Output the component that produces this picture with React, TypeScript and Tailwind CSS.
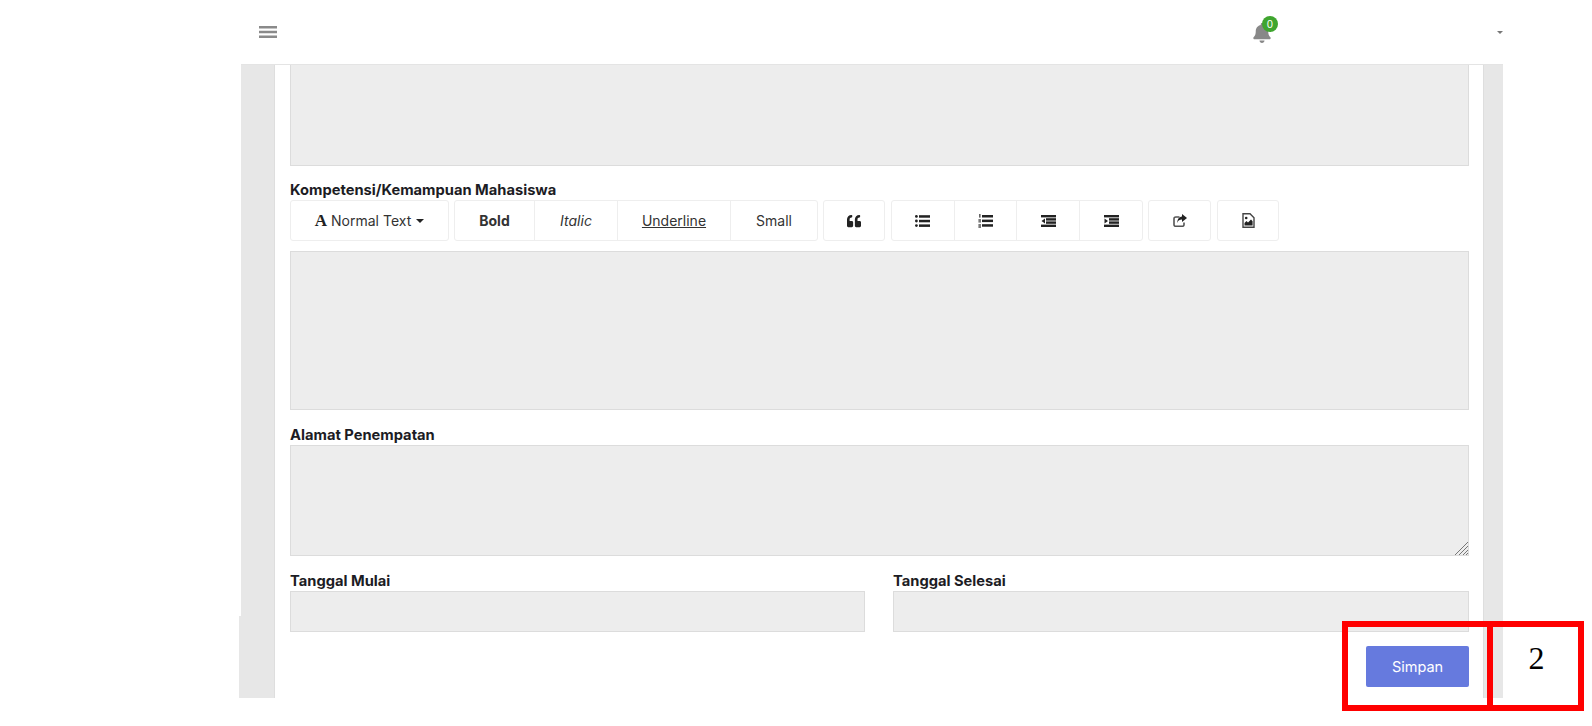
import { FaBell, FaQuoteLeft } from 'react-icons/fa';

const textBtn = 'h-full flex items-center justify-center text-[14px] text-[#333] border-r border-[#eee] last:border-r-0';
const iconBtn = 'h-full flex items-center justify-center text-[#222] border-r border-[#eee] last:border-r-0';
const group = 'h-full flex border border-[#eee] rounded-[3px] bg-white';
const field = 'block w-full bg-[#ededed] border border-[#dcdcdc]';
const label = 'block h-[19px] text-[14.7px] leading-[19px] font-bold text-[#1c1c24]';

const ListIcon = () => (
  <svg width="15" height="12" viewBox="0 0 15 12" fill="currentColor">
    <circle cx="1.4" cy="1.4" r="1.4" />
    <circle cx="1.4" cy="6" r="1.4" />
    <circle cx="1.4" cy="10.6" r="1.4" />
    <rect x="4" y="0.2" width="11" height="2.5" />
    <rect x="4" y="4.8" width="11" height="2.5" />
    <rect x="4" y="9.4" width="11" height="2.5" />
  </svg>
);

const OrderedIcon = () => (
  <svg width="15" height="14" viewBox="0 0 15 14" fill="currentColor">
    <rect x="1" y="0" width="1.6" height="3.6" opacity="0.7" />
    <rect x="0.4" y="5" width="2.6" height="3.6" opacity="0.6" />
    <rect x="0.4" y="10" width="2.6" height="4" opacity="0.6" />
    <rect x="4" y="1" width="11" height="2.5" />
    <rect x="4" y="5.6" width="11" height="2.5" />
    <rect x="4" y="10.2" width="11" height="2.5" />
  </svg>
);

const OutdentIcon = () => (
  <svg width="15" height="12" viewBox="0 0 15 12" fill="currentColor">
    <rect width="15" height="2.4" />
    <rect x="5" y="3.2" width="10" height="2.4" />
    <rect x="5" y="6.4" width="10" height="2.4" />
    <rect y="9.6" width="15" height="2.4" />
    <path d="M0.5 6L4 3.6v4.8z" />
  </svg>
);

const IndentIcon = () => (
  <svg width="15" height="12" viewBox="0 0 15 12" fill="currentColor">
    <rect width="15" height="2.4" />
    <rect x="5" y="3.2" width="10" height="2.4" />
    <rect x="5" y="6.4" width="10" height="2.4" />
    <rect y="9.6" width="15" height="2.4" />
    <path d="M4 6L0.5 3.6v4.8z" />
  </svg>
);

const ShareIcon = () => (
  <svg width="14" height="13" viewBox="0 0 14 13" fill="currentColor">
    <path d="M6.5 3H3A1.8 1.8 0 0 0 1 4.8v5.9A1.6 1.6 0 0 0 2.7 12.3h6.6A1.6 1.6 0 0 0 11 10.7V8.5" fill="none" stroke="#555" strokeWidth="1.6" />
    <path d="M9 0l5 4-5 4V5.6C6.6 5.6 5 6.6 4.4 9 4.1 5.4 6 3 9 2.6z" />
  </svg>
);

const FileImageIcon = () => (
  <svg width="13" height="15" viewBox="0 0 13 15" fill="currentColor">
    <path d="M1 .8h7l4 4v9.4H1z" fill="none" stroke="#444" strokeWidth="1.4" />
    <circle cx="4.2" cy="5" r="1.3" />
    <path d="M2.5 12.6V10l2-2 1.5 1.5L9 6.6l1.6 1.6v4.4z" />
  </svg>
);

const Toolbar = () => (
  <div className="h-[41px] flex gap-[6px]">
    <div className={`${group} w-[159px] mr-[-1px]`}>
      <button className={`${textBtn} w-full gap-[4px]`}>
        <span className="text-[17px] leading-none font-bold text-[#222] font-['Liberation_Serif',serif]">A</span>
        <span>Normal Text</span>
        <span className="w-0 h-0 ml-[1px] border-x-[4px] border-x-transparent border-t-[4px] border-t-[#222]" />
      </button>
    </div>
    <div className={group}>
      <button className={`${textBtn} w-[80px] font-bold text-[#222]`}>Bold</button>
      <button className={`${textBtn} w-[83px] italic`}>Italic</button>
      <button className={`${textBtn} w-[113px] underline`}>Underline</button>
      <button className={`${textBtn} w-[86px]`}>Small</button>
    </div>
    <div className={`${group} ml-[-1px]`}>
      <button className={`${iconBtn} w-[60px]`}><FaQuoteLeft size={14} /></button>
    </div>
    <div className={group}>
      <button className={`${iconBtn} w-[62.5px]`}><ListIcon /></button>
      <button className={`${iconBtn} w-[62.5px]`}><OrderedIcon /></button>
      <button className={`${iconBtn} w-[63px]`}><OutdentIcon /></button>
      <button className={`${iconBtn} w-[62px]`}><IndentIcon /></button>
    </div>
    <div className={`${group} ml-[-1px]`}>
      <button className={`${iconBtn} w-[61px]`}><ShareIcon /></button>
    </div>
    <div className={group}>
      <button className={`${iconBtn} w-[60px]`}><FileImageIcon /></button>
    </div>
  </div>
);

export default function App() {
  return (
    <div className="relative h-[726px] bg-white overflow-hidden font-['Inter','Liberation_Sans',sans-serif]">
      <div className="ml-[239px] w-[1264px]">
        <header className="h-[65px] ml-[2px] flex items-center justify-between pl-[18px] bg-white border-b border-[#e4e4e4]">
          <svg width="18" height="12" viewBox="0 0 18 12" className="text-[#8a8a8a]" fill="currentColor">
            <rect y="0" width="18" height="2.5" />
            <rect y="4.75" width="18" height="2.5" />
            <rect y="9.5" width="18" height="2.5" />
          </svg>
          <div className="flex items-center">
            <div className="relative mr-[225px] mt-[2px]">
              <FaBell size={20} className="text-[#888]" />
              <span className="absolute -top-[7px] left-[10px] w-[16px] h-[16px] rounded-full bg-[#3fa52f] text-white text-[10px] leading-[16px] text-center">0</span>
            </div>
            <span className="w-0 h-0 border-x-[3px] border-x-transparent border-t-[3px] border-t-[#777]" />
          </div>
        </header>

        <main className="h-[633px] flex">
          <div className="w-[35px] flex flex-col">
            <div className="flex-1 ml-[2px] bg-[#e7e7e7]" />
            <div className="h-[82px] bg-[#e7e7e7]" />
          </div>
          <div className="w-[1210px] bg-white border-x border-[#dedede] pl-[15px] pr-[14px]">
            <div className={`${field} h-[101px] border-t-0`} />
            <div className="mt-[15px]">
              <span className={label}>Kompetensi/Kemampuan Mahasiswa</span>
              <Toolbar />
            </div>
            <div className={`${field} h-[159px] mt-[10px]`} />
            <div className="mt-[16px]">
              <span className={label}>Alamat Penempatan</span>
              <div className="relative">
                <textarea disabled className={`${field} h-[111px] resize-none`} />
                <svg width="14" height="14" viewBox="0 0 14 14" className="absolute right-[1px] bottom-[1px] text-[#777]" stroke="currentColor" strokeWidth="1">
                  <path d="M1 14L14 1M5 14L14 5M9 14L14 9M12 14L14 12" />
                </svg>
              </div>
            </div>
            <div className="mt-[16px] flex gap-[28px]">
              <div className="w-[575px]">
                <span className={label}>Tanggal Mulai</span>
                <div className={`${field} h-[41px]`} />
              </div>
              <div className="flex-1">
                <span className={label}>Tanggal Selesai</span>
                <div className={`${field} h-[41px]`} />
              </div>
            </div>
            <div className="mt-[14px] flex justify-end">
              <button className="w-[103px] h-[41px] rounded-[2px] bg-[#667ade] text-white text-[14.5px]">Simpan</button>
            </div>
          </div>
          <div className="w-[19px] bg-[#e7e7e7]" />
        </main>
      </div>

      <div className="absolute left-[1342px] top-[621px] w-[151px] h-[90px] border-[6px] border-[#ff0000]" />
      <div className="absolute left-[1487px] top-[621px] w-[97px] h-[90px] border-[6px] border-[#ff0000] flex items-center justify-center pb-[16px] pl-[2px] text-[32px] text-black font-['Liberation_Serif',serif]">
        2
      </div>
    </div>
  );
}
